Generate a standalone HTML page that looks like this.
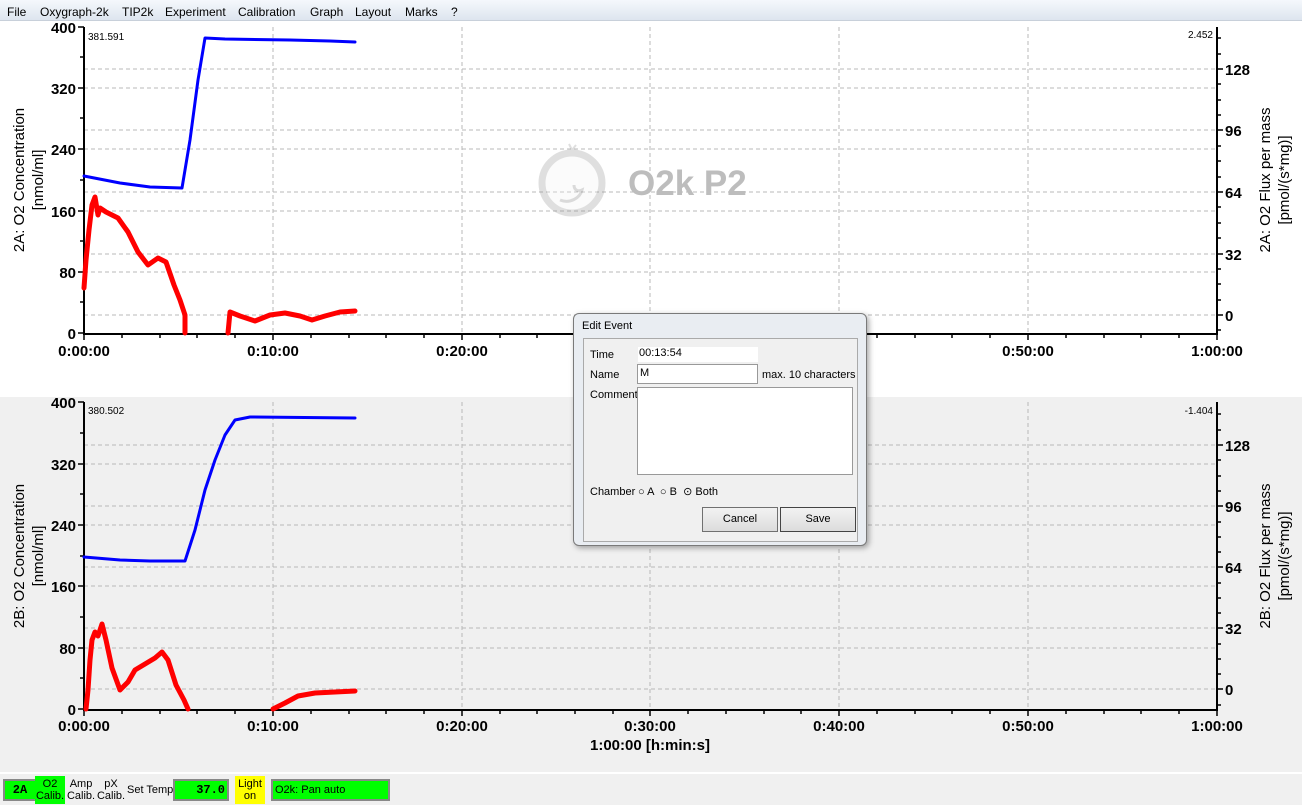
<!DOCTYPE html>
<html><head><meta charset="utf-8"><style>
*{box-sizing:border-box}
body{margin:0;width:1302px;height:805px;overflow:hidden;background:#fff;font-family:"Liberation Sans",sans-serif;position:relative}
.menu{position:absolute;left:0;top:0;width:1302px;height:21px;background:linear-gradient(#f5f8fc,#dde5ef);border-bottom:1px solid #c8d0da;font-size:12px;color:#000}
.menu span{position:absolute;top:5px}
.grey{position:absolute;left:0;top:397px;width:1302px;height:375px;background:#f0f0f0}
.status{position:absolute;left:0;top:772px;width:1302px;height:33px;background:#f0f0f0;border-top:2px solid #fff;font-size:11px}
.status div{position:absolute;text-align:center;line-height:12px}
.dlg{position:absolute;left:573px;top:313px;width:294px;height:233px;background:#e9edf2;border:1px solid #7a7a7a;border-radius:6px;box-shadow:2px 2px 6px rgba(0,0,0,.35);font-size:11px}
.inner{position:absolute;left:9px;top:24px;width:275px;height:204px;background:#f0f0f0;border:1px solid #aaa}
.dlg .l{position:absolute}
.btn{position:absolute;width:76px;height:25px;border:1px solid #707070;background:linear-gradient(#f2f2f2,#dcdcdc);text-align:center;line-height:23px;font-size:11px}
</style></head><body>
<div class="menu"><span style="left:7px">File</span><span style="left:40px">Oxygraph-2k</span><span style="left:122px">TIP2k</span><span style="left:165px">Experiment</span><span style="left:238px">Calibration</span><span style="left:310px">Graph</span><span style="left:355px">Layout</span><span style="left:405px">Marks</span><span style="left:451px">?</span></div>
<div class="grey"></div>
<svg width="1302" height="805" style="position:absolute;left:0;top:0" font-family="Liberation Sans,sans-serif">
<g stroke="#b8b8b8" stroke-dasharray="4,3" stroke-width="1">
<path d="M273 27V333M462 27V333M650 27V333M839 27V333M1028 27V333"/>
<path d="M84 88H1217M84 149H1217M84 211H1217M84 272H1217M84 69H1217M84 130H1217M84 192H1217M84 254H1217M84 315H1217"/>
<path d="M273 402V709M462 402V709M650 402V709M839 402V709M1028 402V709"/>
<path d="M84 464H1217M84 525H1217M84 586H1217M84 648H1217M84 445H1217M84 506H1217M84 567H1217M84 628H1217M84 689H1217"/>
</g>
<g opacity="0.3"><circle cx="572" cy="183" r="30" fill="#f4f4f4" stroke="#999" stroke-width="7"/><path d="M560 200c10 4 20-2 22-10c-4 2-8 0-8-5" stroke="#888" stroke-width="3" fill="none"/><path d="M572 150l-3-6M572 150l4-5" stroke="#999" stroke-width="2"/></g>
<text x="628" y="195" font-size="35" font-weight="bold" fill="#bdbdbd">O2k P2</text>
<g stroke="#000" stroke-width="2" fill="none">
<path d="M84 27V334H1217V27"/><path d="M84 402V710H1217V402"/>
</g>
<g stroke="#000" stroke-width="1.5">
<path d="M78 27H84M78 88H84M78 149H84M78 211H84M78 272H84M78 333H84M80 57H84M80 118H84M80 180H84M80 241H84M80 302H84"/>
<path d="M1217 69H1223M1217 130H1223M1217 192H1223M1217 254H1223M1217 315H1223M1217 38H1221M1217 54H1221M1217 84H1221M1217 100H1221M1217 115H1221M1217 146H1221M1217 161H1221M1217 177H1221M1217 207H1221M1217 223H1221M1217 238H1221M1217 269H1221M1217 284H1221M1217 300H1221M1217 330H1221"/>
<path d="M78 402H84M78 464H84M78 525H84M78 586H84M78 648H84M78 709H84M80 433H84M80 494H84M80 556H84M80 617H84M80 678H84"/>
<path d="M1217 445H1223M1217 506H1223M1217 567H1223M1217 628H1223M1217 689H1223M1217 414H1221M1217 430H1221M1217 460H1221M1217 476H1221M1217 491H1221M1217 522H1221M1217 537H1221M1217 552H1221M1217 583H1221M1217 598H1221M1217 613H1221M1217 644H1221M1217 659H1221M1217 674H1221M1217 705H1221"/>
</g>
<g stroke="#000" stroke-width="1.5">
<path d="M84 334v6M122 334v4M160 334v4M197 334v4M235 334v4M273 334v6M311 334v4M349 334v4M386 334v4M424 334v4M462 334v6M500 334v4M537 334v4M575 334v4M613 334v4M650 334v6M688 334v4M726 334v4M764 334v4M801 334v4M839 334v6M877 334v4M915 334v4M952 334v4M990 334v4M1028 334v6M1066 334v4M1104 334v4M1141 334v4M1179 334v4M1217 334v6"/>
<path transform="translate(0,376)" d="M84 334v6M122 334v4M160 334v4M197 334v4M235 334v4M273 334v6M311 334v4M349 334v4M386 334v4M424 334v4M462 334v6M500 334v4M537 334v4M575 334v4M613 334v4M650 334v6M688 334v4M726 334v4M764 334v4M801 334v4M839 334v6M877 334v4M915 334v4M952 334v4M990 334v4M1028 334v6M1066 334v4M1104 334v4M1141 334v4M1179 334v4M1217 334v6"/>
</g>
<g font-size="15" font-weight="bold" text-anchor="end">
<text x="76" y="33">400</text><text x="76" y="94">320</text><text x="76" y="155">240</text><text x="76" y="217">160</text><text x="76" y="278">80</text><text x="76" y="339">0</text>
<text x="76" y="408">400</text><text x="76" y="470">320</text><text x="76" y="531">240</text><text x="76" y="592">160</text><text x="76" y="654">80</text><text x="76" y="715">0</text>
</g>
<g font-size="15" font-weight="bold">
<text x="1225" y="75">128</text><text x="1225" y="136">96</text><text x="1225" y="198">64</text><text x="1225" y="260">32</text><text x="1225" y="321">0</text>
<text x="1225" y="451">128</text><text x="1225" y="512">96</text><text x="1225" y="573">64</text><text x="1225" y="634">32</text><text x="1225" y="695">0</text>
</g>
<g font-size="15" font-weight="bold" text-anchor="middle">
<text x="84" y="356">0:00:00</text><text x="273" y="356">0:10:00</text><text x="462" y="356">0:20:00</text><text x="650" y="356">0:30:00</text><text x="839" y="356">0:40:00</text><text x="1028" y="356">0:50:00</text><text x="1217" y="356">1:00:00</text>
<text x="84" y="731">0:00:00</text><text x="273" y="731">0:10:00</text><text x="462" y="731">0:20:00</text><text x="650" y="731">0:30:00</text><text x="839" y="731">0:40:00</text><text x="1028" y="731">0:50:00</text><text x="1217" y="731">1:00:00</text>
<text x="650" y="750">1:00:00 [h:min:s]</text>
</g>
<g font-size="15" text-anchor="middle">
<text transform="translate(24,180) rotate(-90)">2A: O2 Concentration</text><text transform="translate(43,180) rotate(-90)">[nmol/ml]</text>
<text transform="translate(24,556) rotate(-90)">2B: O2 Concentration</text><text transform="translate(43,556) rotate(-90)">[nmol/ml]</text>
<text transform="translate(1270,180) rotate(-90)">2A: O2 Flux per mass</text><text transform="translate(1289,180) rotate(-90)">[pmol/(s*mg)]</text>
<text transform="translate(1270,556) rotate(-90)">2B: O2 Flux per mass</text><text transform="translate(1289,556) rotate(-90)">[pmol/(s*mg)]</text>
</g>
<g font-size="10"><text x="88" y="40">381.591</text><text x="88" y="414">380.502</text>
<text x="1213" y="38" text-anchor="end">2.452</text><text x="1213" y="414" text-anchor="end">-1.404</text></g>
<g fill="none" stroke-linejoin="round" stroke-linecap="round">
<polyline stroke="#0000ff" stroke-width="3" points="84,176 120,183 150,187 182,188 190,140 198,80 205,38 225,39 290,40 330,41 355,42"/>
<polyline stroke="#0000ff" stroke-width="3" points="84,557 120,560 150,561 185,561 195,530 205,490 215,460 225,435 235,420 250,417 355,418"/>
<polyline stroke="#ff0000" stroke-width="5" points="84,288 86,260 89,230 92,205 95,197 98,215 100,208 106,212 118,218 128,232 138,252 148,265 158,258 166,262 174,285 180,300 185,315 185,333"/>
<polyline stroke="#ff0000" stroke-width="5" points="228,333 230,312 240,316 255,321 270,315 285,313 300,316 312,320 325,316 340,312 355,311"/>
<polyline stroke="#ff0000" stroke-width="5" points="86,709 88,690 90,660 92,640 95,632 98,636 102,624 106,640 112,668 120,690 128,682 135,670 145,664 155,658 162,652 168,660 176,685 184,700 188,709"/>
<polyline stroke="#ff0000" stroke-width="5" points="273,709 285,703 298,696 315,693 335,692 355,691"/>
</g>
</svg>
<div class="dlg">
<div class="l" style="left:8px;top:6px;font-size:11px">Edit Event</div>
<div class="inner">
<div class="l" style="left:6px;top:10px">Time</div>
<div class="l" style="left:54px;top:8px;width:120px;height:15px;background:#fff;padding-left:1px">00:13:54</div>
<div class="l" style="left:6px;top:30px">Name</div>
<div class="l" style="left:53px;top:25px;width:121px;height:20px;background:#fff;border:1px solid #999;padding:2px 0 0 2px">M</div>
<div class="l" style="left:178px;top:30px">max. 10 characters</div>
<div class="l" style="left:6px;top:50px">Comment</div>
<div class="l" style="left:53px;top:48px;width:216px;height:88px;background:#fff;border:1px solid #999"></div>
<div class="l" style="left:6px;top:147px">Chamber</div>
<div class="l" style="left:54px;top:146px">○ A &nbsp;○ B &nbsp;⊙ Both</div>
<div class="btn" style="left:118px;top:168px">Cancel</div>
<div class="btn" style="left:196px;top:168px;border-color:#444">Save</div>
</div></div>
<div class="status">
<div style="left:3px;top:5px;width:34px;height:22px;background:#00ff00;border:2px solid #888;font:bold 12px 'Liberation Mono',monospace;line-height:18px">2A</div>
<div style="left:35px;top:2px;width:30px;height:28px;background:#00ff00;padding-top:2px">O2<br>Calib.</div>
<div style="left:66px;top:4px;width:30px">Amp<br>Calib.</div>
<div style="left:96px;top:4px;width:30px">pX<br>Calib.</div>
<div style="left:127px;top:10px">Set Temp</div>
<div style="left:173px;top:5px;width:56px;height:22px;background:#00ff00;border:2px solid #888;font:bold 12px 'Liberation Mono',monospace;line-height:18px;text-align:right;padding-right:2px">37.0</div>
<div style="left:235px;top:2px;width:30px;height:28px;background:#ffff00;padding-top:2px">Light<br>on</div>
<div style="left:271px;top:5px;width:119px;height:22px;background:#00ff00;border:2px solid #888;line-height:18px;text-align:left;padding-left:2px">O2k: Pan auto</div>
</div>
</body></html>
